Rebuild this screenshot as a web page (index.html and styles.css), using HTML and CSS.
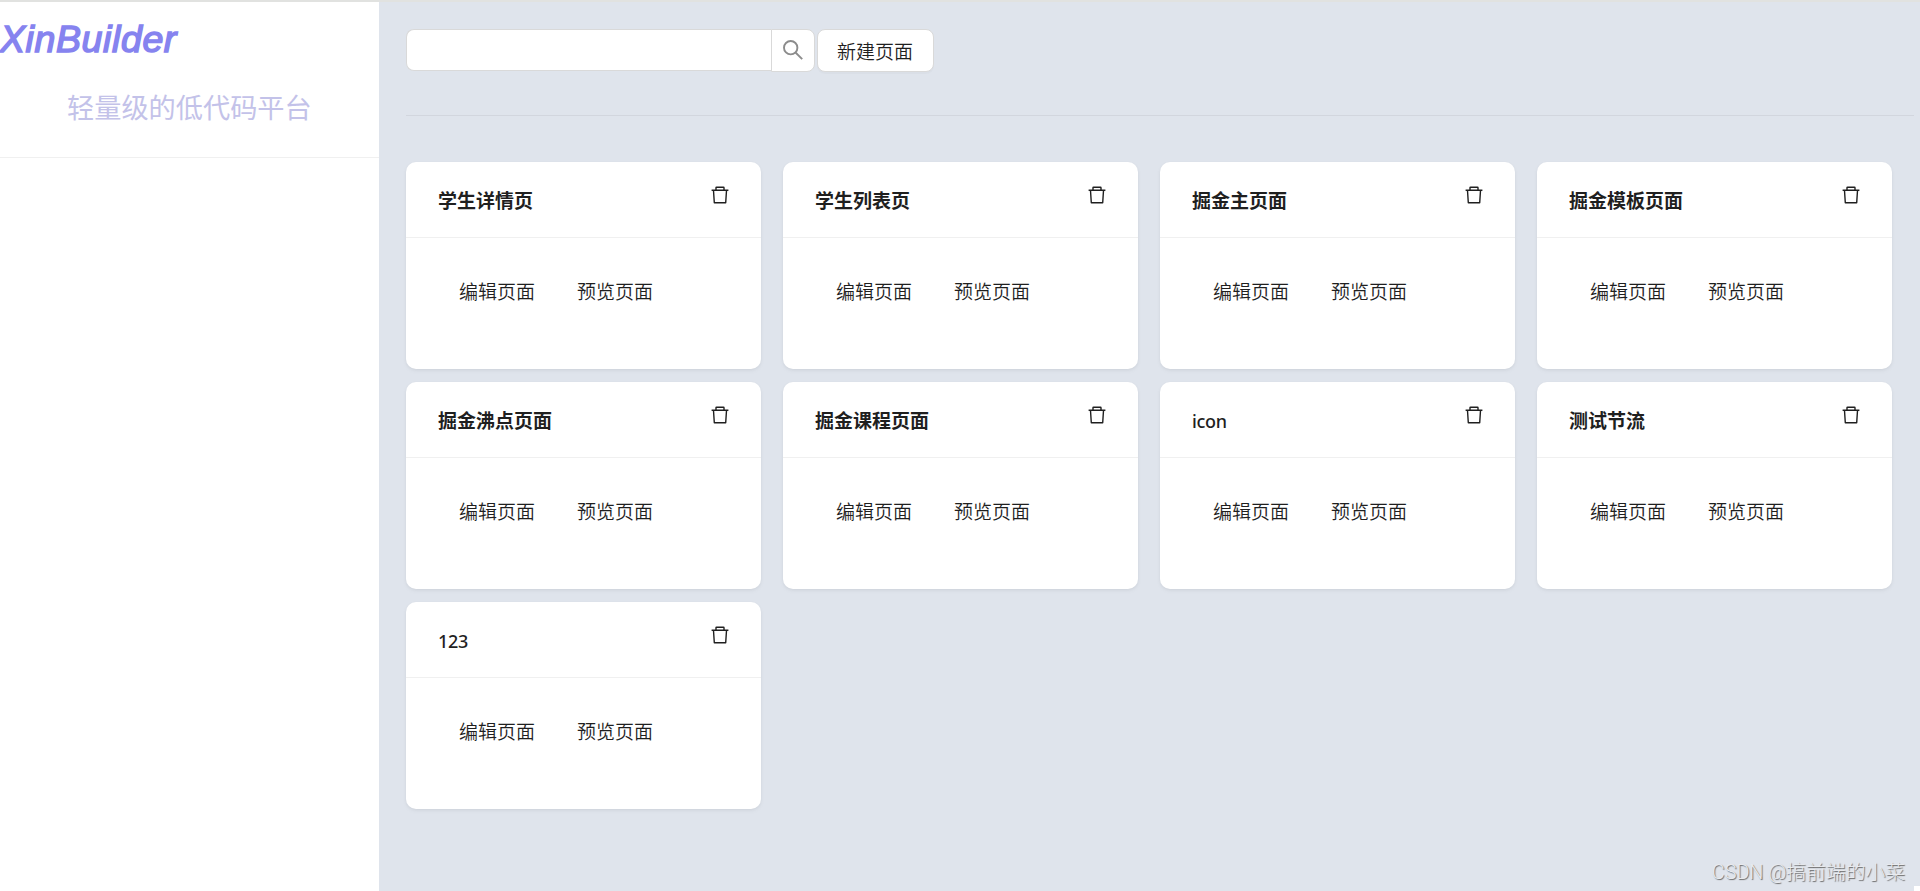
FILE: index.html
```
<!DOCTYPE html>
<html lang="zh-CN">
<head>
    <meta charset="UTF-8">
    <meta name="viewport" content="width=device-width, initial-scale=1.0">
    <title>XinBuilder</title>
    <link rel="stylesheet" href="styles.css">
</head>
<body>
    <svg width="0" height="0" class="sprite">
        <symbol id="trash" viewBox="0 0 18 18">
            <path d="M5 4V1.7Q5 1.2 5.5 1.2H12.5Q13 1.2 13 1.7V4M.6 4.2H17.4M2.5 4.5L3.3 16.8H14.7L15.5 4.5" fill="none" stroke="currentColor" stroke-width="1.4" stroke-linejoin="round"/>
        </symbol>
    </svg>
    <div class="layout">
        <div class="sidebar">
            <h1 class="logo">XinBuilder</h1>
            <p class="slogan">轻量级的低代码平台</p>
        </div>
        <div class="main">
            <div class="toolbar">
                <input class="search-input" type="text">
                <button class="search-btn">
                    <svg width="20" height="20" viewBox="0 0 20 20" fill="none" stroke="#8c8c8c" stroke-width="1.9">
                        <circle cx="7.7" cy="7.7" r="6.7"/>
                        <path d="M12.5 12.5L19.2 19.2"/>
                    </svg>
                </button>
                <button class="create-btn">新建页面</button>
            </div>
            <div class="cards" id="cards"></div>
        </div>
    </div>
    <div class="watermark">CSDN @搞前端的小菜</div>
    <div class="corner"></div>

    <script>
        const pages = ["学生详情页", "学生列表页", "掘金主页面", "掘金模板页面", "掘金沸点页面", "掘金课程页面", "icon", "测试节流", "123"];
        document.getElementById('cards').innerHTML = pages.map(name => `
            <div class="card">
                <div class="card-head">
                    <span class="card-title ${/^\w+$/.test(name) ? "latin" : ""}">${name}</span>
                    <svg class="trash" width="18" height="18"><use href="#trash"/></svg>
                </div>
                <div class="card-body">
                    <a>编辑页面</a>
                    <a>预览页面</a>
                </div>
            </div>`).join("");
    </script>
</body>
</html>
```
FILE: styles.css
```
* {
    box-sizing: border-box;
}
body {
    margin: 0;
    height: 891px;
    overflow: hidden;
    background: #dfe4ec;
    border-top: 2px solid #e1e2e0;
    color: #1f1f1f;
    font-family: "Noto Sans", "Noto Sans CJK SC", sans-serif;
}
.sprite {
    position: absolute;
}
.layout {
    display: flex;
    height: 889px;
}
.sidebar {
    width: 379px;
    background: #fff;
}
.logo {
    margin: 0;
    height: 73px;
    padding-top: 1px;
    line-height: 73px;
    font-family: "Liberation Sans", Arial, sans-serif;
    font-size: 37.5px;
    font-style: italic;
    font-weight: 400;
    letter-spacing: 0.6px;
    color: #8683ef;
    -webkit-text-stroke: 1.5px #8683ef;
}
.slogan {
    margin: 0;
    height: 83px;
    padding: 11px 0 0 67px;
    line-height: 40px;
    font-family: "Noto Sans CJK SC", sans-serif;
    font-size: 27.2px;
    font-weight: 400;
    color: #c3c2e9;
    border-bottom: 1px solid #f0f0f0;
}
.main {
    flex: 1;
    padding: 27px 6px 0 27px;
}
.toolbar {
    display: flex;
    align-items: flex-start;
    height: 87px;
    border-bottom: 1px solid #d2d6de;
}
.search-input {
    width: 365px;
    height: 42px;
    border: 1px solid #d9d9d9;
    border-right: 0;
    border-radius: 8px 0 0 8px;
    background: #fff;
}
.search-btn,
.create-btn {
    display: flex;
    justify-content: center;
    align-items: center;
    height: 43px;
    padding: 0;
    border: 1px solid #d9d9d9;
    background: #fff;
}
.search-btn {
    width: 44px;
    padding-bottom: 2px;
    border-radius: 0 8px 8px 0;
}
.create-btn {
    width: 117px;
    margin-left: 1.5px;
    border-radius: 8px;
    box-shadow: 0 2px 0 rgba(0, 0, 0, 0.02);
    color: #1f1f1f;
    font-family: "Noto Sans CJK SC", sans-serif;
    font-size: 19px;
    font-weight: 350;
}
.cards {
    display: grid;
    grid-template-columns: repeat(4, 355px);
    gap: 13px 22px;
    margin-top: 46px;
}
.card {
    height: 207px;
    border-radius: 10px;
    background: #fff;
    box-shadow: 0 1px 3px rgba(0, 0, 0, 0.04), 0 2px 5px rgba(0, 0, 0, 0.04);
}
.card-head {
    display: flex;
    justify-content: space-between;
    height: 76px;
    padding: 0 32.5px 0 32px;
    line-height: 78px;
    border-bottom: 1px solid #f0f0f0;
}
.card-title {
    font-size: 19px;
    font-weight: 600;
}
.card-title.latin {
    font-size: 18px;
    font-weight: 500;
    letter-spacing: -0.3px;
}
.trash {
    margin-top: 24px;
}
.card-body {
    display: flex;
    gap: 42px;
    padding: 38px 53px;
    line-height: 30px;
    font-family: "Noto Sans CJK SC", sans-serif;
    font-size: 19px;
    font-weight: 350;
}
.watermark {
    position: absolute;
    right: 15px;
    bottom: 4px;
    line-height: 28px;
    font-family: Roboto, "Noto Sans CJK SC", sans-serif;
    font-size: 19.8px;
    font-weight: 300;
    color: #e9ebef;
    text-shadow: 1px 1px 1px #666;
}
.corner {
    position: absolute;
    right: 0;
    bottom: 0;
    width: 6px;
    height: 5px;
    background: #fff;
}
```
